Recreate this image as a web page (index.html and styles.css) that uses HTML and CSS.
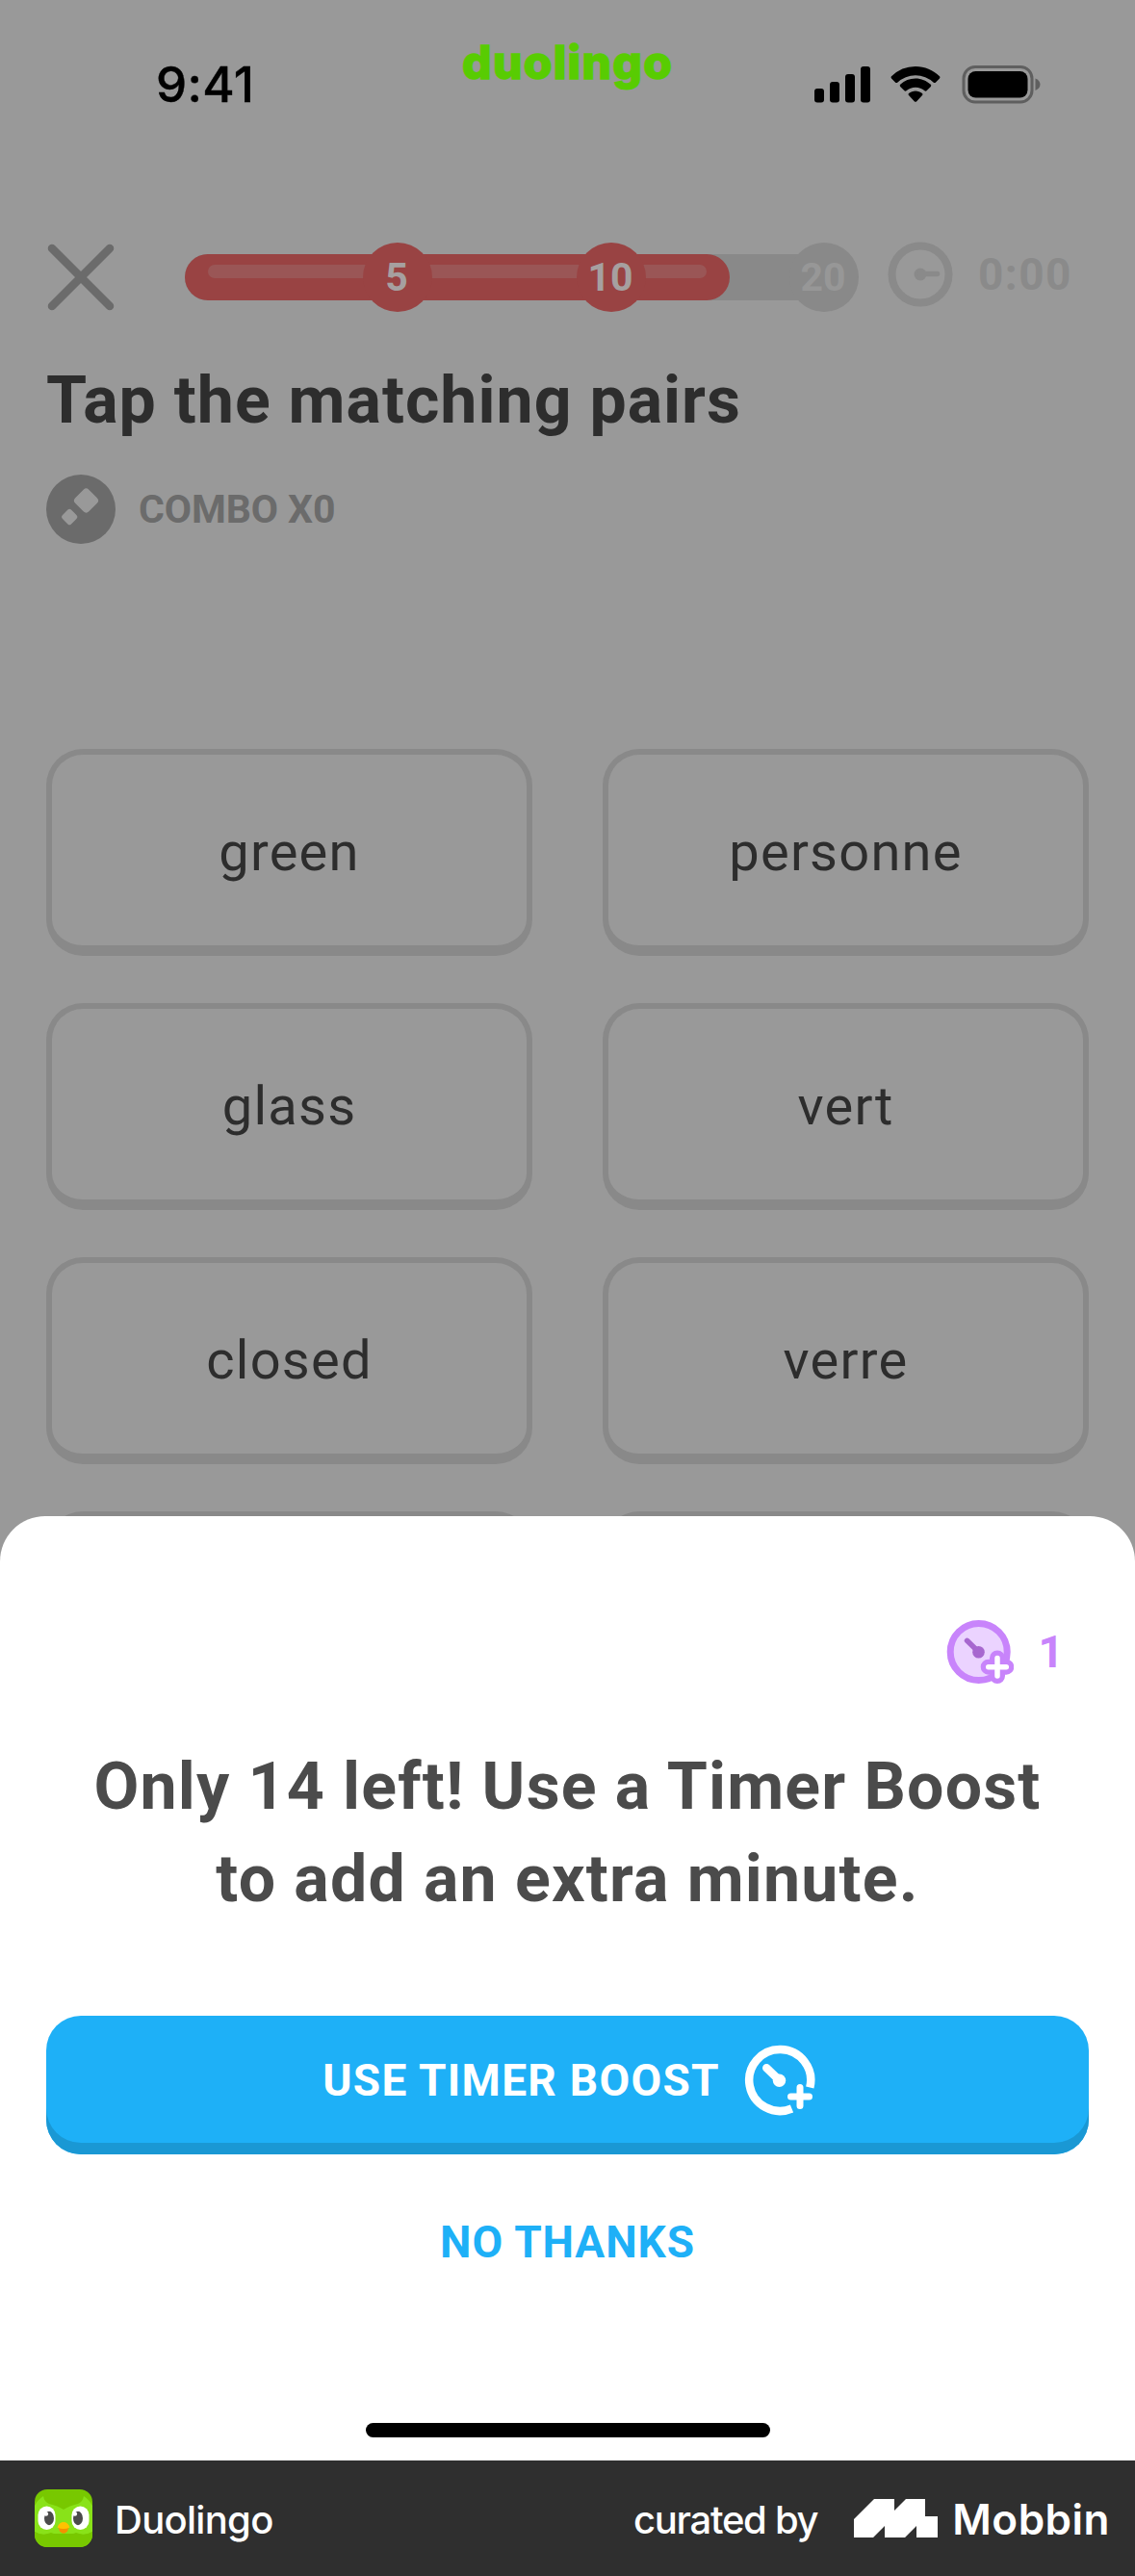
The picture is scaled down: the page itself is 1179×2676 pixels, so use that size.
FILE: index.html
```
<!DOCTYPE html>
<html lang="en">
<head>
<meta charset="utf-8">
<title>Duolingo – Timer Boost</title>
<link rel="stylesheet" href="styles.css">
</head>
<body>
<div class="phone">
  <header class="status">
    <span class="clock">9:41</span>
    <span class="wordmark">duolingo</span>
    <svg class="status-icons" width="238" height="44" viewBox="844 65 238 44">
      <rect x="846" y="92" width="10" height="14.500" rx="3"/>
      <rect x="862" y="85" width="10" height="21.500" rx="3"/>
      <rect x="878" y="77" width="10" height="29.500" rx="3"/>
      <rect x="894" y="69" width="10" height="37.500" rx="3"/>
      <path d="M951 69c9.500 0 18.500 3.800 25 10.300.6.600.6 1.500 0 2.100l-4.200 4.300c-.6.500-1.400.5-2 0a27.500 27.500 0 0 0-37.600 0c-.6.500-1.400.5-2 0l-4.200-4.300c-.6-.6-.6-1.500 0-2.100A35.500 35.500 0 0 1 951 69Z"/>
      <path d="M951 81.500c5.900 0 11.500 2.300 15.800 6.300.6.600.6 1.500 0 2.100l-4.300 4.300c-.6.600-1.400.6-2 .1a14.200 14.200 0 0 0-19 0c-.6.500-1.400.5-2-.1l-4.300-4.300c-.6-.6-.6-1.500 0-2.100a23 23 0 0 1 15.800-6.300Z"/>
      <path d="M951 94.500c2.600 0 5 .9 7 2.600.6.500.6 1.400 0 2l-6 6.300c-.6.600-1.400.6-2 0l-6-6.300c-.6-.6-.6-1.500 0-2 2-1.700 4.400-2.600 7-2.600Z"/>
      <rect x="1001" y="69.500" width="71" height="36.500" rx="12" fill="none" stroke="#5f5f5f" stroke-width="3"/>
      <rect x="1005.500" y="74" width="62" height="27.500" rx="8"/>
      <path d="M1075.500 81.500c3 1.200 5 3.500 5 6.200s-2 5-5 6.200Z" fill="#5f5f5f"/>
    </svg>
  </header>

  <main class="lesson">
    <div class="topbar">
      <svg class="close" width="72" height="72" viewBox="0 0 72 72"><path d="M6 6 66 66M66 6 6 66"/></svg>
      <div class="progress">
        <div class="fill"><div class="shine"></div></div>
        <span class="milestone m5">5</span>
        <span class="milestone m10">10</span>
        <span class="milestone m20">20</span>
      </div>
      <svg class="timer" width="68" height="68" viewBox="0 0 68 68">
        <circle cx="34" cy="34" r="29.500" fill="none" stroke="#8a8a8a" stroke-width="8"/>
        <circle cx="34" cy="34" r="6.500" fill="#8a8a8a"/>
        <path d="M34 33.500H51.500" stroke="#8a8a8a" stroke-width="5.500" stroke-linecap="round"/>
      </svg>
      <span class="time">0:00</span>
    </div>
    <h1 class="title">Tap the matching pairs</h1>
    <div class="combo">
      <svg width="72" height="72" viewBox="0 0 72 72">
        <circle cx="36" cy="36" r="36" fill="#6b6b6b"/>
        <rect x="31.500" y="17" width="20" height="20" rx="4" transform="rotate(45 41.500 27)" fill="#999"/>
        <rect x="17.700" y="37.500" width="13" height="13" rx="2.500" transform="rotate(45 24.200 44)" fill="#999"/>
      </svg>
      <span>COMBO X0</span>
    </div>
    <div class="pairs">
      <button class="card">green</button>
      <button class="card">personne</button>
      <button class="card">glass</button>
      <button class="card">vert</button>
      <button class="card">closed</button>
      <button class="card">verre</button>
      <button class="card"></button>
      <button class="card"></button>
    </div>
  </main>

  <section class="sheet">
    <div class="stock">
      <svg width="72" height="72" viewBox="981 1680 72 72">
        <circle cx="1016.700" cy="1716" r="29.500" fill="#ebd3ff" stroke="#c884fb" stroke-width="7"/>
        <path d="M1004.500 1704.300 1016 1715.500" stroke="#a767cf" stroke-width="5.500" stroke-linecap="round"/>
        <circle cx="1016.500" cy="1716.300" r="6.300" fill="#a767cf"/>
        <path d="M1036 1722.500v18.500M1026.700 1731.700h18.600" stroke="#c884fb" stroke-width="16" stroke-linecap="round"/>
        <path d="M1036 1722.500v18.500M1026.700 1731.700h18.600" stroke="#fff" stroke-width="5.500" stroke-linecap="round"/>
      </svg>
      <span>1</span>
    </div>
    <h2 class="offer">Only 14 left! Use a Timer Boost<br>to add an extra minute.</h2>
    <button class="primary">
      <span>USE TIMER BOOST</span>
      <svg width="76" height="76" viewBox="772 2122 76 76" fill="none" stroke="#fff" stroke-linecap="round">
        <path d="M841.300 2167.500A32 32 0 1 0 822.500 2189.500" stroke-width="8.500" stroke-linecap="butt"/>
        <path d="M796.300 2147.200 808.500 2159" stroke-width="8.500"/>
        <circle cx="809.500" cy="2160.300" r="6.700" fill="#fff" stroke="none"/>
        <path d="M831 2167.500v19M821.500 2177h19" stroke-width="7"/>
      </svg>
    </button>
    <button class="secondary">NO THANKS</button>
    <div class="home-indicator"></div>
  </section>

  <footer class="credit">
    <svg class="app-icon" width="60" height="60" viewBox="0 0 60 60">
      <rect width="60" height="60" rx="13" fill="#78c800"/>
      <path d="M0 44V17q3-6 9-10 1 6 6 8 9 2 15 6 6-4 15-6 5-2 6-8 6 4 9 10V44Q52 49 46 46L14 46Q8 49 0 44Z" fill="#89e219"/>
      <path d="M0 44q8 5 17 1l11 4h4l11-4q9 4 17-1v3a13 13 0 0 1-13 13H13A13 13 0 0 1 0 47Z" fill="#78c800"/>
      <rect x="3.500" y="17.500" width="18" height="24.500" rx="9" fill="#fff"/>
      <rect x="38.500" y="17.500" width="18" height="24.500" rx="9" fill="#fff"/>
      <ellipse cx="15" cy="30" rx="5" ry="7.200" fill="#4b4b4b"/>
      <ellipse cx="45" cy="30" rx="5" ry="7.200" fill="#4b4b4b"/>
      <circle cx="11.800" cy="25.500" r="2.300" fill="#fff"/>
      <circle cx="41.800" cy="25.500" r="2.300" fill="#fff"/>
      <path d="M24.500 39.500h11l-1.500 4q-4 4.500-8 0Z" fill="#f49000"/>
      <path d="M23.500 39.500q2-5.500 6.500-5.500t6.500 5.500q-6.500 3-13 0Z" fill="#ffc200"/>
    </svg>
    <span class="app-name">Duolingo</span>
    <span class="curated">curated by</span>
    <svg class="mobbin-mark" width="87" height="40" viewBox="0 0 87 40"><path d="M0 40V21L21 0H42V12L54 0H74V18H87V40H65V28L53 40H32V28L20 40Z" fill="#fff"/></svg>
    <span class="mobbin">Mobbin</span>
  </footer>
</div>
</body>
</html>
```
FILE: styles.css
```
* { box-sizing: border-box; }

body {
  margin: 0;
  background: #999;
  font-family: Roboto, "Noto Sans", sans-serif;
}

button {
  padding: 0;
  border: 0;
  background: none;
  font: inherit;
  color: inherit;
}

svg { display: block; flex: none; }

.phone {
  width: 1179px;
  height: 2676px;
  display: flex;
  flex-direction: column;
  overflow: hidden;
}

/* Status bar */
.status {
  flex: none;
  height: 174px;
  padding: 0 97px 0 162px;
  display: grid;
  grid-template-columns: 318px 1fr auto;
  align-items: center;
  font-family: Inter, "Liberation Sans", sans-serif;
}
.clock {
  font-size: 51px;
  font-weight: 500;
  letter-spacing: 0.3px;
  -webkit-text-stroke: 0.4px #000;
}
.wordmark {
  align-self: start;
  margin-top: 35px;
  font-size: 48px;
  line-height: 60px;
  font-weight: 800;
  letter-spacing: 1.3px;
  color: #58cc02;
  -webkit-text-stroke: 1.5px #58cc02;
}

/* Lesson */
.lesson {
  flex: none;
  height: 1401px;
  padding: 78px 48px 0;
  overflow: hidden;
}
.topbar {
  height: 72px;
  display: flex;
  align-items: center;
}
.close {
  stroke: #6b6b6b;
  stroke-width: 8.5;
  stroke-linecap: round;
}
.progress {
  width: 700px;
  height: 72px;
  margin-left: 72px;
  padding-right: 36px;
  position: relative;
  display: flex;
  align-items: center;
}
.progress::before {
  content: "";
  flex: 1;
  height: 48px;
  border-radius: 24px;
  background: #898989;
}
.fill {
  position: absolute;
  left: 0;
  top: 12px;
  width: 566px;
  height: 48px;
  padding: 11px 24px;
  border-radius: 24px;
  background: #994343;
}
.shine {
  height: 14px;
  border-radius: 7px;
  background: #9a5656;
}
.milestone {
  position: absolute;
  top: 0;
  width: 72px;
  height: 72px;
  padding-right: 2px;
  border-radius: 50%;
  background: #994343;
  color: #a6a0a0;
  font-size: 41px;
  line-height: 72px;
  font-weight: 700;
  text-align: center;
}
.m5 { left: 185px; }
.m10 { left: 407px; }
.m20 {
  left: 628px;
  background: #898989;
  color: #979797;
}
.timer { margin: -6px 0 0 30px; }
.time {
  margin: -6px 0 0 26px;
  font-size: 46px;
  font-weight: 700;
  letter-spacing: 1.4px;
  color: #8a8a8a;
}
.title {
  margin: 52px 0 0;
  font-size: 68px;
  line-height: 80px;
  font-weight: 700;
  letter-spacing: 1.02px;
  color: #2d2d2d;
}
.combo {
  margin-top: 37px;
  display: flex;
  align-items: center;
  gap: 24px;
  font-size: 41px;
  font-weight: 700;
  letter-spacing: -0.1px;
  color: #6b6b6b;
}
.pairs {
  margin-top: 213px;
  display: grid;
  grid-template-columns: repeat(2, 505px);
  grid-auto-rows: 215px;
  gap: 49px 73px;
}
.card {
  padding-top: 3px;
  border: 6px solid #898989;
  border-bottom-width: 11px;
  border-radius: 38px;
  font-size: 56px;
  letter-spacing: 1.25px;
  color: #2d2d2d;
}

/* Bottom sheet */
.sheet {
  flex: 1;
  padding: 105px 48px 24px;
  display: flex;
  flex-direction: column;
  align-items: center;
  border-radius: 47px 47px 0 0;
  background: #fff;
}
.stock {
  align-self: flex-end;
  height: 72px;
  margin-right: 26px;
  display: flex;
  align-items: center;
  gap: 26px;
  font-size: 46px;
  font-weight: 700;
  color: #c884fb;
}
.offer {
  margin: 56px 0 0;
  font-size: 68px;
  line-height: 96px;
  font-weight: 700;
  letter-spacing: 1.2px;
  text-align: center;
  white-space: nowrap;
  color: #4b4b4b;
}
.primary {
  width: 100%;
  height: 144px;
  margin-top: 94px;
  padding: 0 0 10px 4px;
  display: flex;
  align-items: center;
  justify-content: center;
  gap: 24px;
  border-radius: 36px;
  background: #1eb0f7;
  box-shadow: inset 0 -12px 0 #1a98d4;
  font-size: 46px;
  font-weight: 700;
  letter-spacing: 1.28px;
  color: #fff;
}
.secondary {
  height: 96px;
  margin-top: 43px;
  font-size: 46px;
  font-weight: 700;
  letter-spacing: 0.9px;
  color: #1eb0f7;
}
.home-indicator {
  width: 420px;
  height: 15px;
  margin-top: auto;
  border-radius: 8px;
  background: #000;
}

/* Credit bar */
.credit {
  flex: none;
  height: 120px;
  padding: 0 26px 0 36px;
  display: flex;
  align-items: center;
  background: #2f2f2f;
  color: #fff;
  font-family: Inter, "Liberation Sans", sans-serif;
  font-size: 40px;
  font-weight: 500;
}
.credit span { padding-top: 2px; }
.app-name {
  margin-left: 23px;
  letter-spacing: -0.7px;
}
.curated {
  margin-left: auto;
  letter-spacing: -1.3px;
}
.mobbin-mark { margin: 0 15px 0 38px; }
.mobbin {
  font-size: 44px;
  font-weight: 600;
  letter-spacing: 0.5px;
}
```
